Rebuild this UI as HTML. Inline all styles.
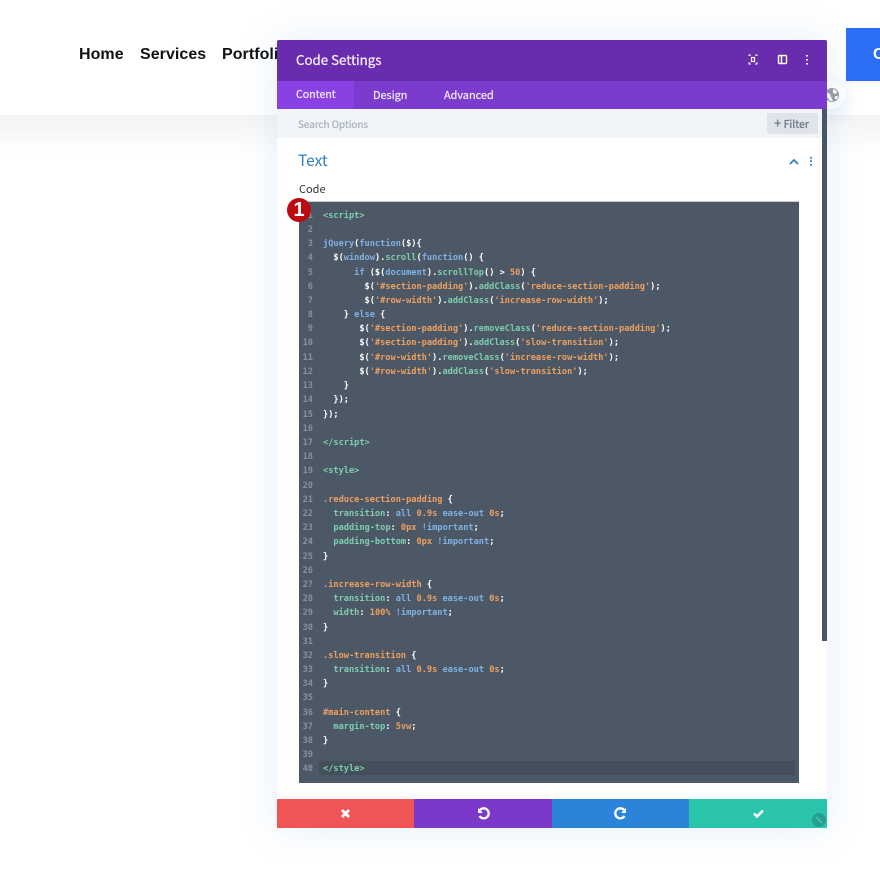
<!DOCTYPE html>
<html><head><meta charset="utf-8"><style>
html,body{margin:0;padding:0;width:880px;height:874px;overflow:hidden;background:#fff;font-family:"Liberation Sans",sans-serif}
div,span.a{position:absolute}
#bg{left:0;top:115px;width:880px;height:40px;background:linear-gradient(#f4f4f4,#fff)}
#hdr{left:0;top:0;width:880px;height:115px;background:#fff}
.nav{top:45px;font-size:16px;font-weight:bold;color:#111;letter-spacing:.05px;white-space:nowrap;line-height:19px}
#modal{left:277px;top:40px;width:550px;height:788px;background:#fff;box-shadow:0 0 40px rgba(43,135,218,.13);border-radius:2px}
.t{white-space:nowrap;font-family:"Noto Sans CJK SC","Liberation Sans",sans-serif}
.s{-webkit-text-stroke:.25px currentColor}
.l{left:323px;margin-top:1px;white-space:pre;font:bold 8.64px/14px "DejaVu Sans Mono",monospace;color:#fff;height:14px;filter:blur(.25px)}
.n{left:299px;margin-top:1px;width:14px;text-align:right;font:bold 8.64px/14px "DejaVu Sans Mono",monospace;color:#87919f;height:14px;filter:blur(.25px)}
i{font-style:normal}.g{color:#7dcfae}.b{color:#7fb2e6}.o{color:#eda060}
</style></head><body>
<div id="bg"></div><div id="hdr"></div>
<div class="nav" style="left:79px">Home</div>
<div class="nav" style="left:140px">Services</div>
<div class="nav" style="left:222px">Portfolio</div>
<div style="left:846px;top:28px;width:34px;height:53px;background:#2b6ff6"></div>
<div style="left:873px;top:45px;color:#fff;font-weight:bold;font-size:16px;line-height:19px">C</div>
<div style="left:810px;top:81px;width:36px;height:28px;border-radius:14px;background:#fff;box-shadow:0 4px 14px rgba(43,135,218,.12)"></div>
<svg style="position:absolute;left:825px;top:88px" width="14" height="14"><circle cx="7" cy="7" r="7" fill="#9a9ea4"/><path d="M1 4l4 2 1 3 2 4-3 0-3-4zM8 1l4 2-1 3-3-1zM10 8l3 0-1 3-2 0z" fill="#fff"/></svg>
<div id="modal"></div>
<div style="left:277px;top:40px;width:550px;height:41px;background:#6a2cae;border-radius:2px 2px 0 0"></div>
<div class="t s" style="left:296px;top:50px;font-size:13.3px;line-height:20px;color:#f3ecfb">Code Settings</div>
<svg style="position:absolute;left:745px;top:50px" width="70" height="20" fill="none" stroke="#fff">
<path d="M4 6V5h2M10 5h2v1M12 12v2h-2M6 14H4v-2" stroke-width="1"/><rect x="6.5" y="7.5" width="3" height="4" stroke-width="1.2"/>
<rect x="33.5" y="5.5" width="8" height="8" rx="1" stroke-width="1.4"/><path d="M36.5 5v9" stroke-width="1.5"/>
<path d="M62 5v1.5M62 9v1.5M62 13v1.5" stroke-width="2"/></svg>
<div style="left:277px;top:81px;width:550px;height:28px;background:#7b3bcc"></div>
<div style="left:277px;top:81px;width:77px;height:28px;background:#8a41e4"></div>
<div class="t s" style="left:296px;top:87px;font-size:10.6px;line-height:16px;color:#f0e8fa">Content</div>
<div class="t s" style="left:373px;top:87px;font-size:10.9px;line-height:16px;color:#f0e8fa">Design</div>
<div class="t s" style="left:444px;top:87px;font-size:10.9px;line-height:16px;color:#f0e8fa">Advanced</div>
<div style="left:277px;top:109px;width:545px;height:29px;background:#f1f5f9"></div>
<div class="t s" style="left:298px;top:116px;font-size:9.9px;line-height:16px;color:#a9b2bc">Search Options</div>
<div style="left:767px;top:113px;width:51px;height:21px;border-radius:2px;background:#dfe4ea"></div>
<div class="t s" style="left:774px;top:115px;font-size:10.5px;line-height:16px;color:#6a7684"><span style="font-size:13px">+</span> Filter</div>
<div style="left:822px;top:109px;width:5px;height:532px;background:#4a5563"></div>
<div class="t" style="left:298px;top:150px;font-size:15.5px;line-height:21px;color:#2f80bf">Text</div>
<svg style="position:absolute;left:787px;top:154px" width="30" height="14" fill="none" stroke="#2b7fc4"><path d="M3 10l4-4 4 4" stroke-width="1.7"/><path d="M24 3v1.6M24 6.4V8M24 10v1.6" stroke-width="2"/></svg>
<div class="t" style="left:299px;top:181px;font-size:11px;line-height:17px;color:#333">Code</div>
<div style="left:299px;top:202px;width:500px;height:581px;background:#4d5866;box-shadow:0 -1px 0 #ccc"></div>
<div style="left:319px;top:761px;width:476px;height:14px;background:#444f5c"></div>
<div class="n" style="top:208px">1</div><div class="l" style="top:208px"><i class="g">&lt;script&gt;</i></div>
<div class="n" style="top:222px">2</div>
<div class="n" style="top:236px">3</div><div class="l" style="top:236px"><i class="b">jQuery</i>(<i class="b">function</i>($){</div>
<div class="n" style="top:250px">4</div><div class="l" style="top:250px">  $(<i class="b">window</i>).<i class="g">scroll</i>(<i class="b">function</i>() {</div>
<div class="n" style="top:265px">5</div><div class="l" style="top:265px">      <i class="b">if</i> ($(<i class="b">document</i>).<i class="g">scrollTop</i>() &gt; <i class="o">50</i>) {</div>
<div class="n" style="top:279px">6</div><div class="l" style="top:279px">        $(<i class="o">'#section-padding'</i>).<i class="g">addClass</i>(<i class="o">'reduce-section-padding'</i>);</div>
<div class="n" style="top:293px">7</div><div class="l" style="top:293px">        $(<i class="o">'#row-width'</i>).<i class="g">addClass</i>(<i class="o">'increase-row-width'</i>);</div>
<div class="n" style="top:307px">8</div><div class="l" style="top:307px">    } <i class="b">else</i> {</div>
<div class="n" style="top:321px">9</div><div class="l" style="top:321px">       $(<i class="o">'#section-padding'</i>).<i class="g">removeClass</i>(<i class="o">'reduce-section-padding'</i>);</div>
<div class="n" style="top:335px">10</div><div class="l" style="top:335px">       $(<i class="o">'#section-padding'</i>).<i class="g">addClass</i>(<i class="o">'slow-transition'</i>);</div>
<div class="n" style="top:350px">11</div><div class="l" style="top:350px">       $(<i class="o">'#row-width'</i>).<i class="g">removeClass</i>(<i class="o">'increase-row-width'</i>);</div>
<div class="n" style="top:364px">12</div><div class="l" style="top:364px">       $(<i class="o">'#row-width'</i>).<i class="g">addClass</i>(<i class="o">'slow-transition'</i>);</div>
<div class="n" style="top:378px">13</div><div class="l" style="top:378px">    }</div>
<div class="n" style="top:392px">14</div><div class="l" style="top:392px">  });</div>
<div class="n" style="top:407px">15</div><div class="l" style="top:407px">});</div>
<div class="n" style="top:421px">16</div>
<div class="n" style="top:435px">17</div><div class="l" style="top:435px"><i class="g">&lt;/script&gt;</i></div>
<div class="n" style="top:449px">18</div>
<div class="n" style="top:463px">19</div><div class="l" style="top:463px"><i class="g">&lt;style&gt;</i></div>
<div class="n" style="top:478px">20</div>
<div class="n" style="top:492px">21</div><div class="l" style="top:492px"><i class="o">.reduce-section-padding</i> {</div>
<div class="n" style="top:506px">22</div><div class="l" style="top:506px">  <i class="g">transition</i>: <i class="b">all</i> <i class="o">0.9s</i> <i class="b">ease-out</i> <i class="o">0s</i>;</div>
<div class="n" style="top:520px">23</div><div class="l" style="top:520px">  <i class="g">padding-top</i>: <i class="o">0px</i> <i class="b">!important</i>;</div>
<div class="n" style="top:534px">24</div><div class="l" style="top:534px">  <i class="g">padding-bottom</i>: <i class="o">0px</i> <i class="b">!important</i>;</div>
<div class="n" style="top:549px">25</div><div class="l" style="top:549px">}</div>
<div class="n" style="top:563px">26</div>
<div class="n" style="top:577px">27</div><div class="l" style="top:577px"><i class="o">.increase-row-width</i> {</div>
<div class="n" style="top:591px">28</div><div class="l" style="top:591px">  <i class="g">transition</i>: <i class="b">all</i> <i class="o">0.9s</i> <i class="b">ease-out</i> <i class="o">0s</i>;</div>
<div class="n" style="top:605px">29</div><div class="l" style="top:605px">  <i class="g">width</i>: <i class="o">100%</i> <i class="b">!important</i>;</div>
<div class="n" style="top:620px">30</div><div class="l" style="top:620px">}</div>
<div class="n" style="top:634px">31</div>
<div class="n" style="top:648px">32</div><div class="l" style="top:648px"><i class="o">.slow-transition</i> {</div>
<div class="n" style="top:662px">33</div><div class="l" style="top:662px">  <i class="g">transition</i>: <i class="b">all</i> <i class="o">0.9s</i> <i class="b">ease-out</i> <i class="o">0s</i>;</div>
<div class="n" style="top:676px">34</div><div class="l" style="top:676px">}</div>
<div class="n" style="top:690px">35</div>
<div class="n" style="top:705px">36</div><div class="l" style="top:705px"><i class="o">#main-content</i> {</div>
<div class="n" style="top:719px">37</div><div class="l" style="top:719px">  <i class="g">margin-top</i>: <i class="o">5vw</i>;</div>
<div class="n" style="top:733px">38</div><div class="l" style="top:733px">}</div>
<div class="n" style="top:747px">39</div>
<div class="n" style="top:761px">40</div><div class="l" style="top:761px"><i class="g">&lt;/style&gt;</i></div>
<div style="left:287px;top:198px;width:24px;height:24px;border-radius:12px;background:#bb0b10;color:#fff;font-size:20px;font-weight:bold;line-height:24px;text-align:center">1</div>
<div style="left:277px;top:799px;width:137px;height:29px;background:#ef5555"></div>
<div style="left:414px;top:799px;width:138px;height:29px;background:#7b38c9"></div>
<div style="left:552px;top:799px;width:137px;height:29px;background:#2b84d9"></div>
<div style="left:689px;top:799px;width:138px;height:29px;background:#29c4a9"></div>
<svg style="position:absolute;left:277px;top:799px" width="550" height="29" fill="none" stroke="#fff">
<path d="M65 11l7 7M72 11l-7 7" stroke-width="2.8"/>
<path d="M203 11a5 5 0 1 1-.5 6" stroke-width="2.3"/><path d="M201 9v5h5z" fill="#fff" stroke="none"/>
<path d="M347 11a5 5 0 1 0 .5 6" stroke-width="2.3"/><path d="M349 9v5h-5z" fill="#fff" stroke="none"/>
<path d="M477 14.5l3 3 6-6" stroke-width="2.6"/>
<circle cx="542" cy="21" r="7" fill="#23a08f" stroke="none"/><path d="M539 18l6 6" stroke="#5fc9b8" stroke-width="1.2"/>
</svg>
</body></html>
